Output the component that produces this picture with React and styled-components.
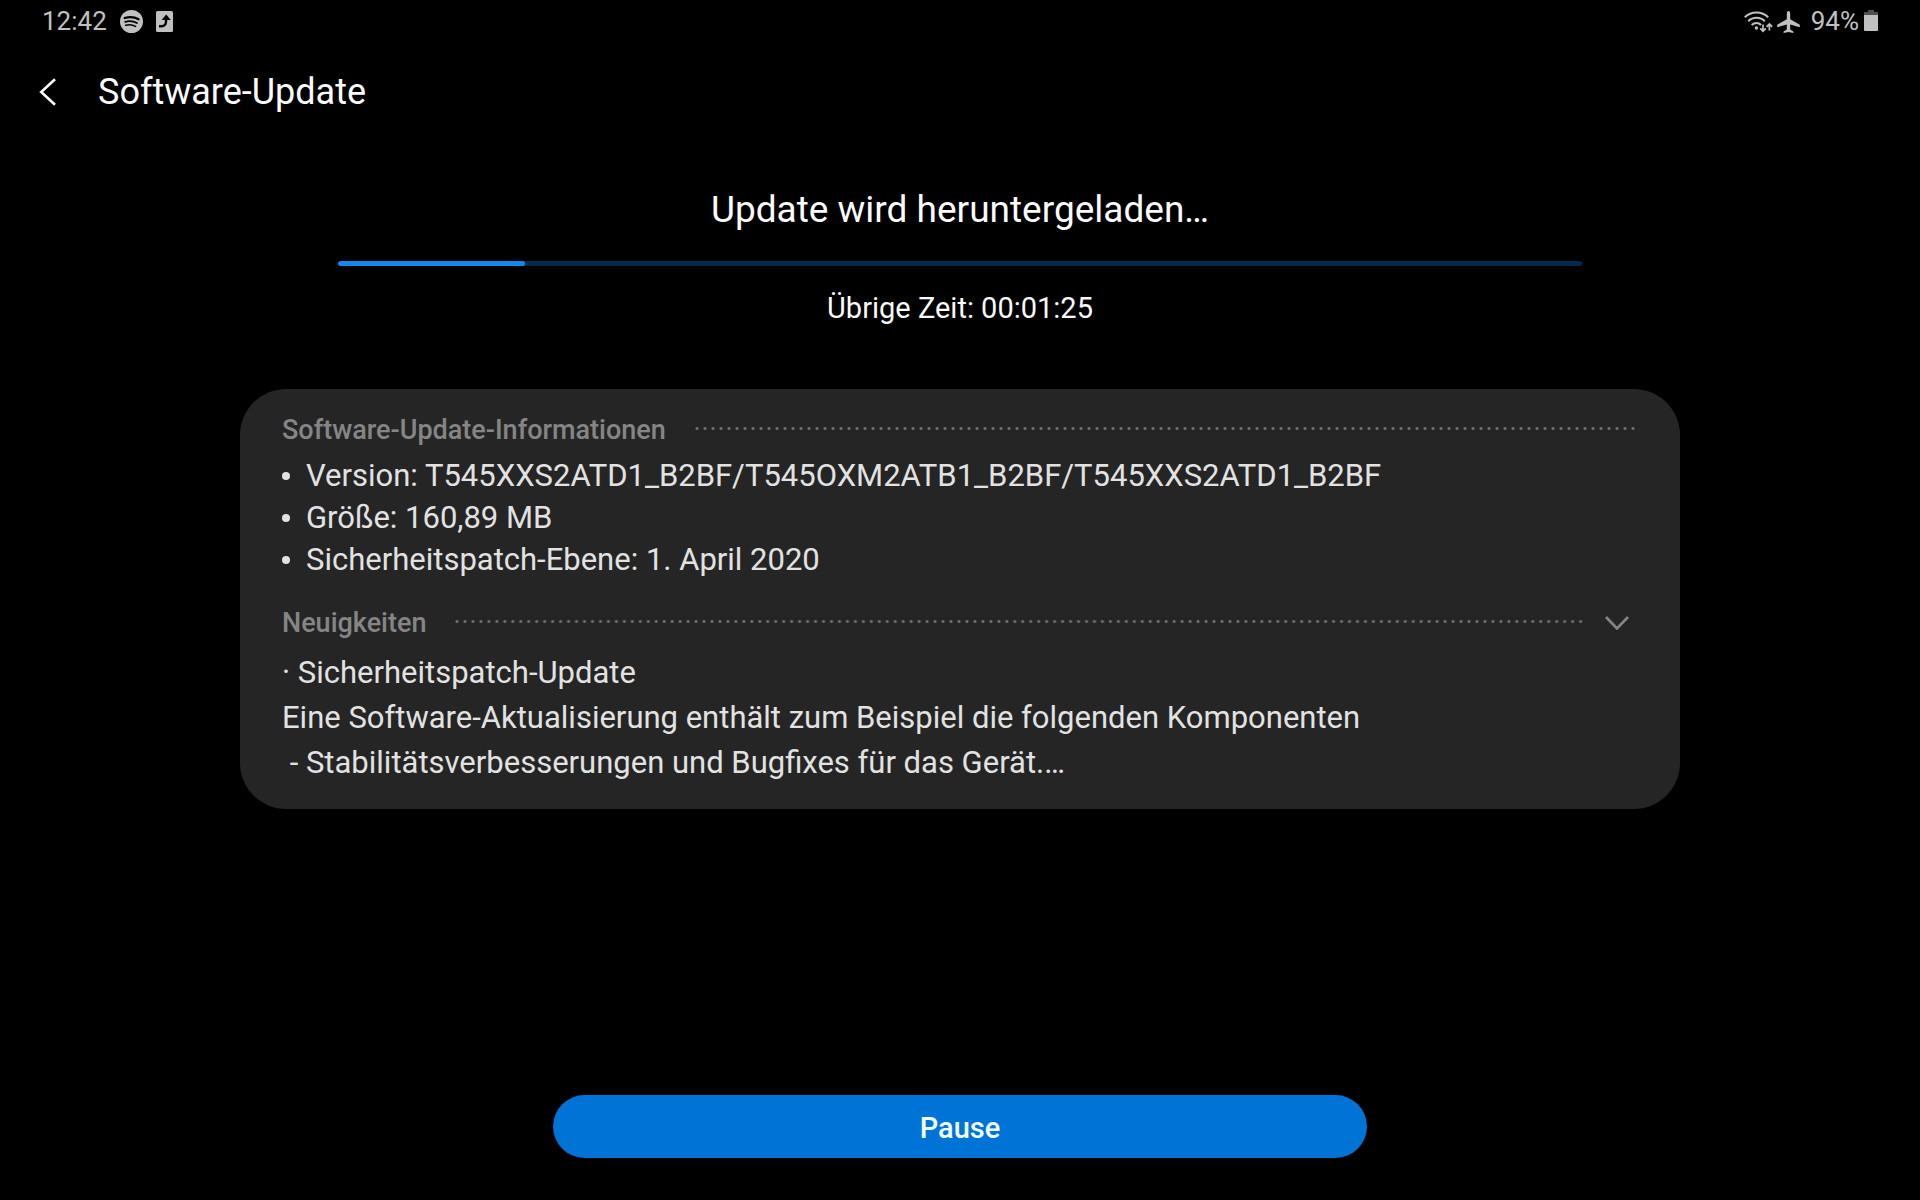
import React from "react";
import styled, { createGlobalStyle } from "styled-components";

const GlobalStyle = createGlobalStyle`
  *, *::before, *::after { box-sizing: border-box; }
  body {
    margin: 0;
    background: #000;
    color: #fafafa;
    font-family: Roboto, "Noto Sans", sans-serif;
  }
`;

const Screen = styled.div`
  display: flex;
  flex-direction: column;
  min-height: 100vh;
  padding-bottom: 42px;
`;

const StatusBar = styled.div`
  display: flex;
  justify-content: space-between;
  height: 43px;
  padding: 0 42px;
  font-size: 26px;
  line-height: 43px;
  color: #c0c0c0;
`;

const StatusGroup = styled.div`
  display: flex;
  align-items: center;
  gap: ${(p) => p.$gap}px;

  svg { display: block; }
`;

const AppBar = styled.header`
  display: flex;
  align-items: center;
  gap: 26px;
  height: 98px;
  padding-left: 24px;
`;

const BackButton = styled.button`
  display: flex;
  align-items: center;
  justify-content: center;
  width: 48px;
  height: 48px;
  padding: 0;
  border: 0;
  background: none;
  color: inherit;
`;

const ExpandButton = styled(BackButton)`
  width: 52px;
  height: 42px;
  padding-left: 10px;
`;

const Title = styled.h1`
  margin: 0;
  font-size: 36px;
  line-height: 48px;
  font-weight: 400;
`;

const Main = styled.main`
  display: flex;
  flex: 1;
  flex-direction: column;
  width: 75%;
  margin: 0 auto;
`;

const Download = styled.section`
  display: flex;
  flex-direction: column;
  align-items: center;
  padding: 45px 98px 63px;
`;

const DownloadTitle = styled.h2`
  margin: 0 0 27px;
  font-size: 37px;
  line-height: 48px;
  font-weight: 400;
`;

const ProgressBar = styled.progress`
  display: block;
  appearance: none;
  width: 100%;
  height: 5px;
  border: 0;
  border-radius: 3px;
  overflow: hidden;
  background: #03294b;

  &::-webkit-progress-bar { background: #03294b; border-radius: 3px; }
  &::-webkit-progress-value { background: #1188ee; border-radius: 3px; }
`;

const Remaining = styled.p`
  margin: 24px 0 0;
  font-size: 29px;
  line-height: 36px;
`;

const Card = styled.section`
  padding: 20px 42px 24px;
  border-radius: 46px;
  background: #252525;
  color: #e2e2e2;
  font-size: 31px;
`;

const SectionHead = styled.div`
  display: flex;
  align-items: center;
  height: 42px;
  margin-top: ${(p) => p.$top}px;
  color: #858585;
`;

const SectionTitle = styled.h3`
  margin: 0 27px 0 0;
  font-size: 27px;
  line-height: 42px;
  font-weight: 500;
`;

const DottedLine = styled.span`
  flex: 1;
  height: 3px;
  margin-bottom: 4px;
  background: radial-gradient(circle at center, #707070 1px, transparent 2px) 0 0 / 8px 3px round;
`;

const InfoList = styled.ul`
  margin: 4px 0 0;
  padding: 0;
  list-style: none;
`;

const InfoItem = styled.li`
  display: flex;
  align-items: center;
  gap: 16px;
  line-height: 42px;

  &::before {
    content: "";
    width: 8px;
    height: 8px;
    border-radius: 50%;
    background: currentColor;
  }
`;

const News = styled.p`
  margin: 6px 0 0;
  line-height: 45px;
  white-space: pre-wrap;
`;

const PauseButton = styled.button`
  width: min(814px, 100%);
  height: 63px;
  margin: auto auto 0;
  padding: 2px 0 0;
  border: 0;
  border-radius: 32px;
  background: #0074d6;
  color: #f2ffff;
  font-family: inherit;
  font-size: 29px;
  font-weight: 500;
`;

const MusicIcon = () => (
  <svg width="23" height="23" viewBox="0 0 24 24" aria-hidden="true">
    <circle cx="12" cy="12" r="12" fill="#c0c0c0" />
    <g fill="none" stroke="#000" strokeLinecap="round">
      <path d="M4.8 8.4c5-1.5 10.600-1 14.600 1.300" strokeWidth="2.300" />
      <path d="M5.400 12.300c4.400-1.300 8.800-.8 12.300 1.300" strokeWidth="1.900" />
      <path d="M6 15.900c3.700-1 7.200-.6 10.200 1.200" strokeWidth="1.600" />
    </g>
  </svg>
);

const UpdateIcon = () => (
  <svg width="17" height="21" viewBox="0 0 17 21" aria-hidden="true">
    <rect width="17" height="21" rx="1.500" fill="#c0c0c0" />
    <path d="M3 15.200h2.500c2.800 0 4.500-1.700 4.500-4.700V7" fill="none" stroke="#000" strokeWidth="2.400" />
    <path d="M10.200 3.600 14.800 9H5.600z" fill="#000" />
  </svg>
);

const WifiIcon = () => (
  <svg width="29" height="24" viewBox="0 0 29 24" aria-hidden="true">
    <g fill="none" stroke="#c0c0c0" strokeWidth="2">
      <path d="M.8 7.300c6.500-6.400 16.900-6.400 23.400 0" />
      <path d="M4.200 11.200c4.700-4.600 12.100-4.600 16.600 0" />
      <path d="M7.700 15c2.800-2.600 6.800-2.600 9.400 0" />
      <path d="M19 14.500v6.300M16.200 18.300l2.800 2.900 2.800-2.900" strokeWidth="1.700" />
      <path d="M25.400 20.500v-6.300M22.600 16.800l2.800-2.900 2.800 2.900" strokeWidth="1.700" />
    </g>
    <circle cx="12.400" cy="18" r="1.700" fill="#c0c0c0" />
  </svg>
);

const AirplaneIcon = () => (
  <svg width="23" height="22" viewBox="0 0 23 22" aria-hidden="true">
    <path
      d="M11.500 0c1 0 1.700 1.200 1.700 2.800v5.400l9.600 5.600v2.400l-9.600-2.700v4.900l3.200 2.100V22l-4.900-1.100L6.600 22v-1.500l3.200-2.100v-4.900L.2 16.200v-2.400l9.600-5.600V2.800C9.800 1.200 10.500 0 11.500 0z"
      fill="#c0c0c0"
    />
  </svg>
);

const BatteryIcon = () => (
  <svg width="14" height="23" viewBox="0 0 14 23" aria-hidden="true">
    <path d="M4 0h6v2h4v3H0V2h4z" fill="#505050" />
    <path d="M0 5h14v15a1 1 0 0 1-1 1H1a1 1 0 0 1-1-1z" fill="#c0c0c0" />
  </svg>
);

const BackIcon = () => (
  <svg width="18" height="28" viewBox="0 0 18 28" aria-hidden="true">
    <path d="M16 1.200 2.200 14 16 26.800" fill="none" stroke="currentColor" strokeWidth="2.600" />
  </svg>
);

const ExpandIcon = () => (
  <svg width="24" height="14" viewBox="0 0 24 14" aria-hidden="true">
    <path d="M1 1l11 11.500L23 1" fill="none" stroke="currentColor" strokeWidth="2.600" />
  </svg>
);

const info = [
  "Version: T545XXS2ATD1_B2BF/T545OXM2ATB1_B2BF/T545XXS2ATD1_B2BF",
  "Größe: 160,89 MB",
  "Sicherheitspatch-Ebene: 1. April 2020",
];

const news = [
  "· Sicherheitspatch-Update",
  "Eine Software-Aktualisierung enthält zum Beispiel die folgenden Komponenten",
  " - Stabilitätsverbesserungen und Bugfixes für das Gerät.…",
].join("\n");

export default function App() {
  return (
    <Screen>
      <GlobalStyle />
      <StatusBar>
        <StatusGroup $gap={13}>
          <span>12:42</span>
          <MusicIcon />
          <UpdateIcon />
        </StatusGroup>
        <StatusGroup $gap={4}>
          <WifiIcon />
          <AirplaneIcon />
          <StatusGroup $gap={5}>
            <span>&nbsp;94%</span>
            <BatteryIcon />
          </StatusGroup>
        </StatusGroup>
      </StatusBar>
      <AppBar>
        <BackButton type="button" aria-label="Zurück">
          <BackIcon />
        </BackButton>
        <Title>Software-Update</Title>
      </AppBar>
      <Main>
        <Download>
          <DownloadTitle id="download-title">Update wird heruntergeladen…</DownloadTitle>
          <ProgressBar value={15} max={100} aria-labelledby="download-title" />
          <Remaining>Übrige Zeit: 00:01:25</Remaining>
        </Download>
        <Card>
          <SectionHead $top={0}>
            <SectionTitle>Software-Update-Informationen</SectionTitle>
            <DottedLine />
          </SectionHead>
          <InfoList>
            {info.map((line) => (
              <InfoItem key={line}>{line}</InfoItem>
            ))}
          </InfoList>
          <SectionHead $top={21}>
            <SectionTitle>Neuigkeiten</SectionTitle>
            <DottedLine />
            <ExpandButton type="button" aria-label="Neuigkeiten anzeigen">
              <ExpandIcon />
            </ExpandButton>
          </SectionHead>
          <News>{news}</News>
        </Card>
        <PauseButton type="button">Pause</PauseButton>
      </Main>
    </Screen>
  );
}
